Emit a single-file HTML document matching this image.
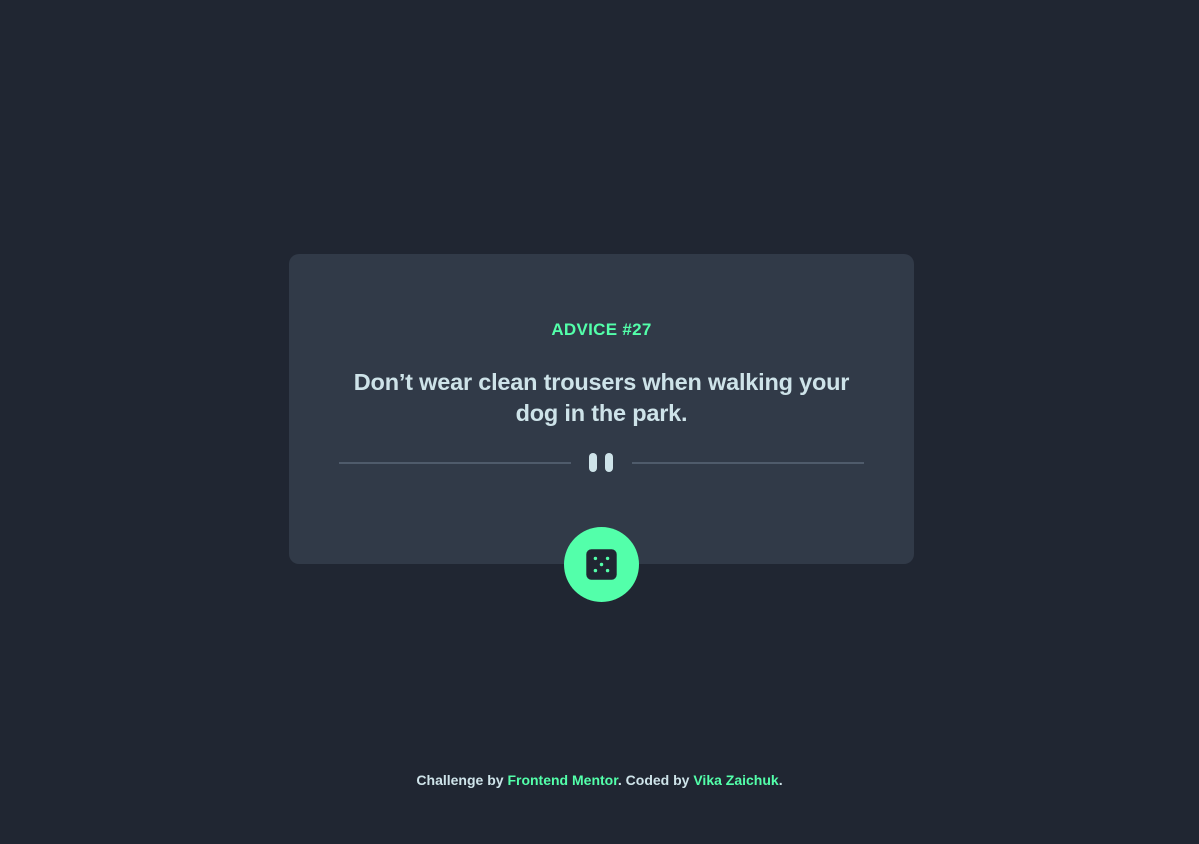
<!DOCTYPE html>
<html><head><meta charset="utf-8"><style>
*{margin:0;padding:0;box-sizing:border-box}
body{width:1199px;height:844px;background:#202632;font-family:"Liberation Sans",sans-serif;position:relative;overflow:hidden}
.card{position:absolute;left:289px;top:254px;width:625px;height:310px;background:#313a48;border-radius:10px}
.t{position:absolute;left:0;width:100%;text-align:center;font-weight:bold}
.h{top:66px;color:#53ffaa;font-size:17px;letter-spacing:0.3px}
.q{top:113px;color:#cee3e9;font-size:23.5px;line-height:31px;padding:0 50px;letter-spacing:-0.2px}
.line{position:absolute;top:208px;height:2px;background:#4f5b6b;width:232px}
.bar{position:absolute;top:199px;width:8px;height:19px;border-radius:4px;background:#cee3e9}
.btn{position:absolute;left:564px;top:527px;width:75px;height:75px;border-radius:50%;background:#53ffaa}
.foot{position:absolute;top:772px;left:0;width:100%;text-align:center;font-size:14px;font-weight:bold;color:#cee3e9}
.foot span{color:#53ffaa}
</style></head><body>
<div class="card">
<div class="t h">ADVICE #27</div>
<div class="t q">Don’t wear clean trousers when walking your<br>dog in the park.</div>
<div class="line" style="left:50px"></div>
<div class="line" style="left:343px"></div>
<div class="bar" style="left:300px"></div>
<div class="bar" style="left:316px"></div>
</div>
<div class="btn"><svg width="75" height="75" viewBox="0 0 74 74"><rect x="22" y="22" width="30" height="30" rx="5" fill="#202632"/><g fill="#53ffaa"><circle cx="31" cy="31" r="1.7"/><circle cx="43" cy="31" r="1.7"/><circle cx="37" cy="37" r="1.7"/><circle cx="31" cy="43" r="1.7"/><circle cx="43" cy="43" r="1.7"/></g></svg></div>
<div class="foot">Challenge by <span>Frontend Mentor</span>. Coded by <span>Vika Zaichuk</span>.</div>
</body></html>
